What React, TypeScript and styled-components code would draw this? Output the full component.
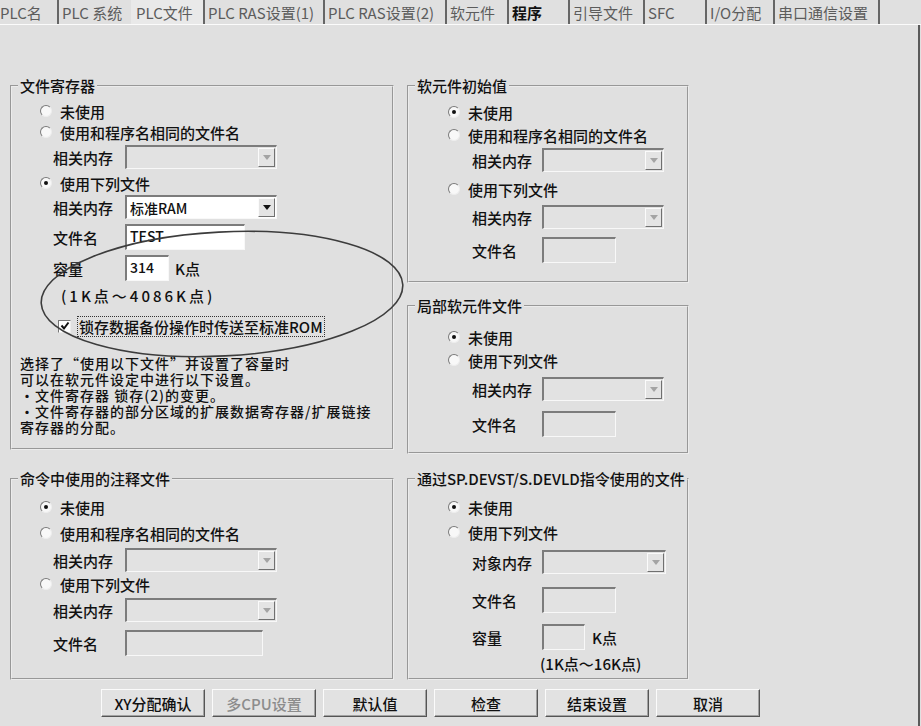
import React from 'react';
import styled, { createGlobalStyle } from 'styled-components';

const GlobalStyle = createGlobalStyle`
  * { box-sizing: border-box; }
  html, body { margin: 0; padding: 0; background: #e0e0e0; }
  body {
    font-family: 'Noto Sans CJK SC', 'Noto Sans', sans-serif;
    font-size: 15px;
    font-weight: 500;
    color: #111;
  }
`;

interface TabItem {
  label: string;
  width: number;
  sep?: boolean;
  active?: boolean;
  bold?: boolean;
  end?: boolean;
}

const TABS: TabItem[] = [
  { label: 'PLC名', width: 57 },
  { label: 'PLC 系统', width: 74, sep: true },
  { label: 'PLC文件', width: 72, active: true },
  { label: 'PLC RAS设置(1)', width: 120, sep: true },
  { label: 'PLC RAS设置(2)', width: 122, sep: true },
  { label: '软元件', width: 62, sep: true },
  { label: '程序', width: 61, sep: true, bold: true },
  { label: '引导文件', width: 75, sep: true },
  { label: 'SFC', width: 62, sep: true },
  { label: 'I/O分配', width: 68, sep: true },
  { label: '串口通信设置', width: 107, sep: true, end: true },
];

const BUTTONS = [
  { label: 'XY分配确认' },
  { label: '多CPU设置', disabled: true },
  { label: '默认值' },
  { label: '检查' },
  { label: '结束设置' },
  { label: '取消' },
];

const RadioOption: React.FC<{ h: number; checked?: boolean; children: React.ReactNode }> = ({
  h,
  checked,
  children,
}) => (
  <Row $h={h}>
    <RadioDot $on={checked} />
    {children}
  </Row>
);

const ComboField: React.FC<{ w: number; enabled?: boolean; value?: string }> = ({
  w,
  enabled,
  value,
}) => (
  <Combo $w={w} $enabled={enabled}>
    <ComboText>{value}</ComboText>
    <ComboButton $enabled={enabled} />
  </Combo>
);

const App: React.FC = () => {
  return (
    <Window>
      <GlobalStyle />
      <TabStrip>
        {TABS.map((t) => (
          <Tab key={t.label} $w={t.width} $sep={t.sep} $active={t.active} $bold={t.bold} $end={t.end}>
            {t.label}
          </Tab>
        ))}
      </TabStrip>

      <Body>
        <Panels>
          <GroupBox $h={365}>
            <Title>文件寄存器</Title>
            <Section $pl={28} $pt={7}>
              <RadioOption h={20}>未使用</RadioOption>
              <RadioOption h={22}>使用和程序名相同的文件名</RadioOption>
              <Row $h={28} $indent={13}>
                <Label $w={72}>相关内存</Label>
                <ComboField w={152} />
              </Row>
              <RadioOption h={24} checked>
                使用下列文件
              </RadioOption>
              <Row $h={24} $indent={13}>
                <Label $w={72}>相关内存</Label>
                <ComboField w={152} enabled value="标准RAM" />
              </Row>
              <Row $h={36} $indent={13}>
                <Label $w={72}>文件名</Label>
                <TextBox $w={120} $enabled>
                  TEST
                </TextBox>
              </Row>
              <Row $h={26} $indent={13}>
                <Label $w={72}>容量</Label>
                <TextBox $w={44} $enabled>
                  314
                </TextBox>
                <Unit>K点</Unit>
              </Row>
              <Row $h={28} $indent={21}>
                <Range $spread>(1K点～4086K点)</Range>
              </Row>
              <Row $h={34} $indent={18}>
                <CheckBox>
                  <svg width="10" height="10" viewBox="0 0 10 10">
                    <path d="M1.5 4.5 L4 7.5 L8.5 1.5" fill="none" stroke="#111" strokeWidth="2" />
                  </svg>
                </CheckBox>
                <FocusLabel>锁存数据备份操作时传送至标准ROM</FocusLabel>
              </Row>
            </Section>
            <Note>
              选择了“使用以下文件”并设置了容量时
              <br />
              可以在软元件设定中进行以下设置。
              <br />
              ・文件寄存器 锁存(2)的变更。
              <br />
              ・文件寄存器的部分区域的扩展数据寄存器/扩展链接
              <br />
              寄存器的分配。
            </Note>
          </GroupBox>

          <Stack>
            <GroupBox $h={198}>
              <Title>软元件初始值</Title>
              <Section $pl={39} $pt={8}>
                <RadioOption h={20} checked>
                  未使用
                </RadioOption>
                <RadioOption h={26}>使用和程序名相同的文件名</RadioOption>
                <Row $h={24} $indent={24}>
                  <Label $w={70}>相关内存</Label>
                  <ComboField w={122} />
                </Row>
                <RadioOption h={34}>使用下列文件</RadioOption>
                <Row $h={22} $indent={24}>
                  <Label $w={70}>相关内存</Label>
                  <ComboField w={122} />
                </Row>
                <Row $h={44} $indent={24}>
                  <Label $w={70}>文件名</Label>
                  <TextBox $w={74} />
                </Row>
              </Section>
            </GroupBox>

            <GroupBox $h={149}>
              <Title>局部软元件文件</Title>
              <Section $pl={39} $pt={13}>
                <RadioOption h={20} checked>
                  未使用
                </RadioOption>
                <RadioOption h={26}>使用下列文件</RadioOption>
                <Row $h={32} $indent={24}>
                  <Label $w={70}>相关内存</Label>
                  <ComboField w={122} />
                </Row>
                <Row $h={38} $indent={24}>
                  <Label $w={70}>文件名</Label>
                  <TextBox $w={74} />
                </Row>
              </Section>
            </GroupBox>
          </Stack>

          <GroupBox $h={202}>
            <Title>命令中使用的注释文件</Title>
            <Section $pl={28} $pt={10}>
              <RadioOption h={20} checked>
                未使用
              </RadioOption>
              <RadioOption h={32}>使用和程序名相同的文件名</RadioOption>
              <Row $h={22} $indent={13}>
                <Label $w={72}>相关内存</Label>
                <ComboField w={152} />
              </Row>
              <RadioOption h={26}>使用下列文件</RadioOption>
              <Row $h={26} $indent={13}>
                <Label $w={72}>相关内存</Label>
                <ComboField w={152} />
              </Row>
              <Row $h={40} $indent={13}>
                <Label $w={72}>文件名</Label>
                <TextBox $w={138} />
              </Row>
            </Section>
          </GroupBox>

          <GroupBox $h={202}>
            <Title>通过SP.DEVST/S.DEVLD指令使用的文件</Title>
            <Section $pl={39} $pt={10}>
              <RadioOption h={20} checked>
                未使用
              </RadioOption>
              <RadioOption h={30}>使用下列文件</RadioOption>
              <Row $h={30} $indent={24}>
                <Label $w={70}>对象内存</Label>
                <ComboField w={124} />
              </Row>
              <Row $h={46} $indent={24}>
                <Label $w={70}>文件名</Label>
                <TextBox $w={74} />
              </Row>
              <Row $h={28} $indent={24}>
                <Label $w={70}>容量</Label>
                <TextBox $w={43} />
                <Unit $gap={7}>K点</Unit>
              </Row>
              <Row $h={24} $indent={92}>
                <Range>(1K点～16K点)</Range>
              </Row>
            </Section>
          </GroupBox>
        </Panels>

        <ButtonRow>
          {BUTTONS.map((b) => (
            <Button key={b.label} $disabled={b.disabled}>
              {b.label}
            </Button>
          ))}
        </ButtonRow>
      </Body>

      <Overlay viewBox="0 0 921 726" width="921" height="726">
        <ellipse
          cx="222"
          cy="294"
          rx="181"
          ry="62"
          transform="rotate(-3 222 294)"
          fill="none"
          stroke="#3c3c3c"
          strokeWidth="1.6"
        />
      </Overlay>
    </Window>
  );
};

export default App;

const Window = styled.div`
  position: relative;
  width: 921px;
  height: 726px;
  background: #e0e0e0;
  overflow: hidden;
`;

const TabStrip = styled.div`
  display: flex;
  height: 25px;
  border-bottom: 1px solid #fbfbfb;
`;

const Tab = styled.div<{ $w: number; $sep?: boolean; $active?: boolean; $bold?: boolean; $end?: boolean }>`
  flex: none;
  width: ${({ $w }) => $w}px;
  height: 24px;
  display: flex;
  align-items: center;
  padding-left: ${({ $sep, $active }) => ($sep ? 3 : $active ? 5 : 0)}px;
  border-left: ${({ $sep }) => ($sep ? '2px solid #666' : 'none')};
  border-right: ${({ $end }) => ($end ? '2px solid #666' : 'none')};
  background: ${({ $active }) => ($active ? '#e9e9e9' : 'transparent')};
  color: ${({ $bold }) => ($bold ? '#111' : '#5c5c5c')};
  font-weight: ${({ $bold }) => ($bold ? 700 : 400)};
  font-size: 15px;
  white-space: nowrap;
`;

const Body = styled.div`
  width: 920px;
  height: 701px;
  padding: 60px 0 0 10px;
  border-right: 2px solid #5a5a5a;
`;

const Panels = styled.div`
  display: grid;
  grid-template-columns: 384px 282px;
  column-gap: 13px;
  row-gap: 24px;
  align-items: start;
`;

const Stack = styled.div`
  display: flex;
  flex-direction: column;
  gap: 22px;
`;

const GroupBox = styled.div<{ $h: number }>`
  height: ${({ $h }) => $h}px;
  border: 2px groove #ececec;
`;

const Title = styled.div`
  width: fit-content;
  margin: -9px 0 0 6px;
  padding: 0 2px;
  height: 16px;
  line-height: 16px;
  background: #e0e0e0;
  white-space: nowrap;
`;

const Section = styled.div<{ $pl: number; $pt: number }>`
  padding: ${({ $pt }) => $pt}px 0 0 ${({ $pl }) => $pl}px;
`;

const Row = styled.div<{ $h: number; $indent?: number }>`
  display: flex;
  align-items: center;
  height: ${({ $h }) => $h}px;
  padding-left: ${({ $indent }) => $indent ?? 0}px;
  white-space: nowrap;
`;

const RadioDot = styled.span<{ $on?: boolean }>`
  flex: none;
  width: 12px;
  height: 12px;
  margin-right: 8px;
  border-radius: 50%;
  background: #f8f8f8;
  border: 1px solid;
  border-color: #7a7a7a #eeeeee #eeeeee #7a7a7a;
  display: flex;
  align-items: center;
  justify-content: center;
  &::after {
    content: '';
    width: 4px;
    height: 4px;
    border-radius: 50%;
    background: #111;
    display: ${({ $on }) => ($on ? 'block' : 'none')};
  }
`;

const Label = styled.span<{ $w: number }>`
  flex: none;
  width: ${({ $w }) => $w}px;
`;

const Combo = styled.div<{ $w: number; $enabled?: boolean }>`
  flex: none;
  width: ${({ $w }) => $w}px;
  height: 24px;
  display: flex;
  align-items: center;
  justify-content: space-between;
  padding: 0 1px 0 3px;
  background: ${({ $enabled }) => ($enabled ? '#ffffff' : '#e2e2e2')};
  border-style: solid;
  border-width: 2px 1px 1px 2px;
  border-color: #7c7c7c #f8f8f8 #f8f8f8 #7c7c7c;
`;

const ComboText = styled.span`
  font-size: 14px;
  line-height: 18px;
`;

const ComboButton = styled.span<{ $enabled?: boolean }>`
  flex: none;
  width: 17px;
  height: 19px;
  display: flex;
  align-items: center;
  justify-content: center;
  background: #e4e4e4;
  border: 1px solid;
  border-color: #fbfbfb #707070 #707070 #fbfbfb;
  &::before {
    content: '';
    border-left: 4px solid transparent;
    border-right: 4px solid transparent;
    border-top: 5px solid ${({ $enabled }) => ($enabled ? '#111' : '#a4a4a4')};
  }
`;

const TextBox = styled.div<{ $w: number; $enabled?: boolean }>`
  flex: none;
  width: ${({ $w }) => $w}px;
  height: 26px;
  padding: 1px 0 0 3px;
  font-size: 14px;
  line-height: 18px;
  background: ${({ $enabled }) => ($enabled ? '#ffffff' : '#e2e2e2')};
  border-style: solid;
  border-width: 2px 1px 1px 2px;
  border-color: #7c7c7c #f8f8f8 #f8f8f8 #7c7c7c;
`;

const Unit = styled.span<{ $gap?: number }>`
  margin-left: ${({ $gap }) => $gap ?? 6}px;
`;

const Range = styled.span<{ $spread?: boolean }>`
  letter-spacing: ${({ $spread }) => ($spread ? 3 : 0)}px;
`;

const CheckBox = styled.span`
  flex: none;
  width: 13px;
  height: 13px;
  display: flex;
  align-items: center;
  justify-content: center;
  background: #ffffff;
  border: 1px solid;
  border-color: #777777 #eeeeee #eeeeee #777777;
`;

const FocusLabel = styled.span`
  margin-left: 7px;
  padding: 0 1px;
  line-height: 19px;
  outline: 1px dotted #333;
`;

const Note = styled.div`
  margin-top: 12px;
  padding-left: 8px;
  font-size: 14px;
  letter-spacing: 1px;
  line-height: 16px;
  white-space: nowrap;
`;

const ButtonRow = styled.div`
  display: flex;
  gap: 7px;
  margin-top: 9px;
  padding-left: 91px;
`;

const Button = styled.button<{ $disabled?: boolean }>`
  flex: none;
  width: 104px;
  height: 28px;
  padding: 0;
  font-family: inherit;
  font-size: 15px;
  font-weight: 500;
  color: ${({ $disabled }) => ($disabled ? '#8c8c8c' : '#111')};
  background: #e2e2e2;
  border: 1px solid;
  border-color: #fbfbfb #555555 #555555 #fbfbfb;
  box-shadow: inset -1px -1px 0 #a2a2a2;
`;

const Overlay = styled.svg`
  position: absolute;
  left: 0;
  top: 0;
  pointer-events: none;
`;
